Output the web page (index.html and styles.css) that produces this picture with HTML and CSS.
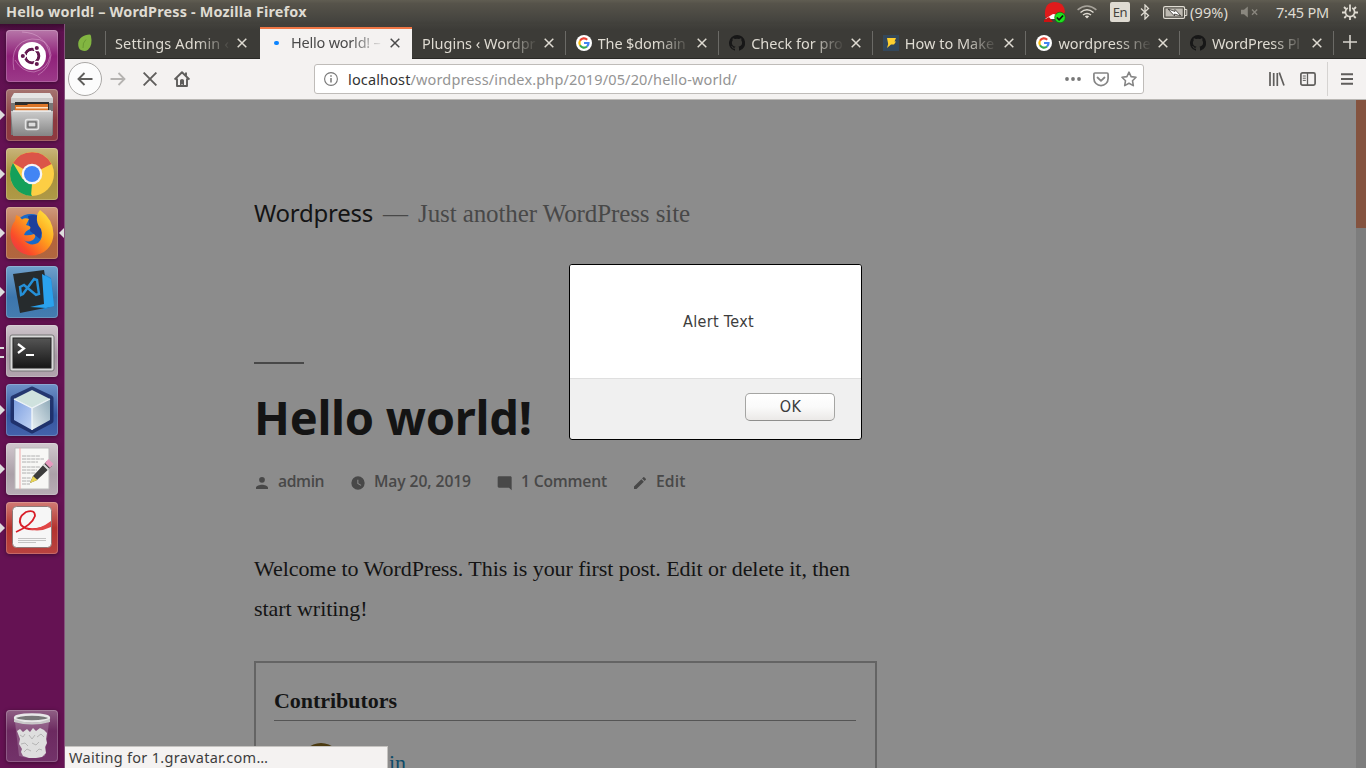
FILE: index.html
```html
<!DOCTYPE html>
<html lang="en">
<head>
<meta charset="utf-8">
<title>Hello world! – WordPress</title>
<link rel="stylesheet" href="styles.css">
</head>
<body>
<svg width="0" height="0" class="defs" aria-hidden="true">
  <defs>
    <linearGradient id="steel" x1="0" y1="0" x2="0" y2="1"><stop offset="0" stop-color="#ccc"/><stop offset="1" stop-color="#858585"/></linearGradient>
    <linearGradient id="dark" x1="0" y1="0" x2="0" y2="1"><stop offset="0" stop-color="#555"/><stop offset="1" stop-color="#161616"/></linearGradient>
    <linearGradient id="fire" x1="1" y1="0" x2="0" y2="1"><stop offset="0" stop-color="#fff14a"/><stop offset=".4" stop-color="#ffa51c"/><stop offset=".75" stop-color="#fa4b2a"/><stop offset="1" stop-color="#e52a5c"/></linearGradient>
    <linearGradient id="cubeL" x1="0" y1="0" x2="1" y2="1"><stop offset="0" stop-color="#7d9fe0"/><stop offset="1" stop-color="#c3d5f4"/></linearGradient>
    <linearGradient id="cubeR" x1="0" y1="1" x2="1" y2="0"><stop offset="0" stop-color="#e9f0f3"/><stop offset="1" stop-color="#8ea9b8"/></linearGradient>
    <symbol id="x" viewBox="0 0 10 10"><path d="M.7.7l8.6 8.6M9.3.7L.7 9.3" fill="none" stroke="currentColor" stroke-width="1.5"/></symbol>
    <symbol id="google" viewBox="0 0 16 16"><circle cx="8" cy="8" r="8" fill="#fff"/><g fill="none" stroke-width="2.2"><path d="M4 5.7A4.6 4.6 0 0 1 11.2 4.7" stroke="#ea4335"/><path d="M4 10.3A4.6 4.6 0 0 1 4 5.7" stroke="#fbbc05"/><path d="M11 11.5A4.6 4.6 0 0 1 4 10.3" stroke="#34a853"/><path d="M8 8h4.5A4.6 4.6 0 0 1 11 11.5" stroke="#4285f4"/></g></symbol>
    <symbol id="github" viewBox="0 0 16 16"><path fill="#171717" d="M8 0a8 8 0 0 0-2.5 15.6c.4.1.5-.2.5-.4v-1.500c-2.200.5-2.700-.9-2.700-.9-.4-.9-.9-1.200-.9-1.200-.7-.5.100-.5.100-.5.8.100 1.200.8 1.200.8.7 1.200 1.900.9 2.300.7.100-.5.300-.9.500-1.100-1.800-.2-3.600-.9-3.600-4 0-.9.300-1.600.8-2.100-.100-.2-.4-1 .100-2.100 0 0 .7-.2 2.200.8a7.500 7.500 0 0 1 4 0c1.500-1 2.200-.8 2.200-.8.4 1.100.200 1.900.1 2.100.5.600.8 1.300.8 2.100 0 3.100-1.900 3.800-3.700 4 .300.300.6.8.6 1.500v2.200c0 .2.100.5.600.4A8 8 0 0 0 8 0z"/></symbol>
  </defs>
</svg>

<header class="panel">
  <span class="panel-title">Hello world! – WordPress - Mozilla Firefox</span>
  <div class="tray">
    <svg class="t-hat" width="22" height="22" viewBox="0 0 22 22"><path d="M1 15Q0 1 11 1Q20 1 21 11L18 16L3 19z" fill="#e01b1b"/><path d="M1 18L9 13L15 14L13 18z" fill="#fff"/><path d="M0 19L5 16L9 21H0z" fill="#c11"/><circle cx="16" cy="16.500" r="5.300" fill="#1fe01f" stroke="#0b6b0b" stroke-width=".7"/><path d="M12.800 16.500l2.300 2.300 4-4.300" fill="none" stroke="#111" stroke-width="1.700"/></svg>
    <svg class="t-wifi" width="20" height="14" viewBox="0 0 20 14"><g fill="none" stroke="#dfdbd2" stroke-width="1.500"><path d="M.6 4.800Q10-2.800 19.400 4.800" opacity=".6"/><path d="M3.500 7.500Q10 2.200 16.500 7.500"/><path d="M6 10Q10 6.900 14 10"/></g><path d="M7.800 11.300Q10 9.600 12.200 11.300L10 13.500z" fill="#dfdbd2"/></svg>
    <span class="lang">En</span>
    <svg class="t-bt" width="10" height="16" viewBox="0 0 10 16"><path d="M1 4.500l7.500 7L5 15V1l3.500 3.500L1 11.500" fill="none" stroke="#dfdbd2" stroke-width="1.300"/></svg>
    <svg class="t-bat" width="25" height="13" viewBox="0 0 25 13"><rect x=".6" y=".6" width="21" height="11.800" rx="1.500" fill="none" stroke="#dfdbd2" stroke-width="1.200"/><path d="M22 3.500h1.800v6H22" fill="none" stroke="#dfdbd2"/><rect x="2.500" y="2.500" width="17.200" height="8" fill="#bdb9b1"/><path d="M5 3l7 2.500v-2l6 6.500-6.500-2v2z" fill="#fff" stroke="#45433e" stroke-width=".9"/></svg>
    <span class="pct">(99%)</span>
    <svg class="t-vol" width="18" height="12" viewBox="0 0 18 12"><path d="M0 3.800h3L6.800.6v10.800L3 8.200H0z" fill="#8a877f"/><path d="M11 3.500l5.200 5.200M16.200 3.500L11 8.700" stroke="#8a877f" stroke-width="1.300"/></svg>
    <span class="clock">7:45 PM</span>
    <svg class="t-gear" width="16" height="16" viewBox="0 0 16 16"><g fill="none" stroke="#dfdbd2"><path d="M5.800 4A4.600 4.600 0 1 0 10.200 4" stroke-width="1.700"/><path d="M8 .5v7" stroke-width="1.800"/><path d="M2 3l2 2M12 5l2-2M0 8.500h3M13 8.500h3M2.300 14l2-2M13.700 14l-2-2M8 13v3" stroke-width="1.800"/></g></svg>
  </div>
</header>

<div class="desktop">
  <nav class="launcher">
    <div class="tile ubuntu"><svg viewBox="0 0 52 52"><g fill="none" stroke="#e6b8dc" stroke-opacity=".45"><path d="M8 40Q3 12 26 9Q43 8 45 25Q44 38 32 45"/><path d="M16 2Q40 3 44 26Q42 39 28 42Q16 42 9 30"/></g><circle cx="26" cy="26" r="14" fill="#fff"/><circle cx="26" cy="26" r="6.800" fill="none" stroke="#63184f" stroke-width="3"/><g stroke="#fff" stroke-width="1.300" fill="#63184f"><path d="M26 26L16 26M26 26l5.500-9.500M26 26l5.500 9.500"/><circle cx="16.800" cy="26" r="2.700"/><circle cx="30.800" cy="18" r="2.700"/><circle cx="30.800" cy="34" r="2.700"/></g><circle cx="26" cy="26" r="5.200" fill="#fff"/></svg></div>
    <div class="tile files run"><svg viewBox="0 0 52 52"><path d="M7 5h38l2 8v33H5V13z" fill="#777"/><path d="M8 4h36l3 5H5z" fill="#e5e5e5"/><path d="M5 9h42v5H5z" fill="#c9c9c9"/><path d="M9 13h34v8H9z" fill="#2d2d2d"/><path d="M9 16h12l1-1h20v7H9z" fill="#dc7628"/><path d="M10 18h32v1.500H10z" fill="#ffe3c5"/><path d="M5 22h42l-1 25H7z" fill="url(#steel)"/><path d="M7 22h38" stroke="#f0f0f0" stroke-width="1.500"/><rect x="19.500" y="30.500" width="13" height="10" rx="2" fill="none" stroke="#e4e4e4" stroke-width="1.500"/><rect x="22" y="33" width="8" height="5" fill="#ddd" stroke="#555"/></svg></div>
    <div class="tile chrome run"><svg viewBox="0 0 52 52"><circle cx="26" cy="26" r="22" fill="#fcce44"/><path d="M26 26L7 15A22 22 0 0 1 45.500 16z" fill="#db5548"/><path d="M26 26l0 22A22 22 0 0 1 7 15L16.500 31z" fill="#14a05a"/><path d="M26 36l-1 12L35 31z" fill="#fcce44"/><circle cx="26" cy="26" r="10.300" fill="#f5f5f5"/><circle cx="26" cy="26" r="8" fill="#4285f4"/></svg></div>
    <div class="tile firefox run active"><svg viewBox="0 0 52 52"><circle cx="25" cy="25" r="18" fill="#1769ca"/><path d="M22 9Q34 5 38 18L34 32L24 24Z" fill="#1d3f9b"/><path d="M34 3Q47 12 47.500 27A21.500 21.500 0 0 1 4.500 27Q5 18 9 14L10 8Q14 9 16 12.500Q19 10.500 23 12L20 18Q26 19 24 22Q19 24 18 28Q23 29 28 27Q31 29 27 33Q21 36 18 33Q24 40 32 36Q38 31 35 22Q30 17 31 9Q32 5 34 3z" fill="url(#fire)"/></svg></div>
    <div class="tile code run"><svg viewBox="0 0 52 52"><path d="M36 7l9 5 3 28-11 4z" fill="#1b8ad8"/><path d="M7 8L38 4l6 37-30 6z" fill="#262b2d"/><path d="M24 41l14-3-2-30 9 5 3 27-8 2z" fill="#2aa2ee"/><path d="M14 21l4-2 12 10 3-1-2-14-3-1-11 15-2 1z" fill="none" stroke="#2590d8" stroke-width="2.400"/></svg></div>
    <div class="tile term run two"><svg viewBox="0 0 52 52"><rect x="4" y="10" width="44" height="36" rx="2" fill="#d9d9d9" stroke="#777"/><rect x="7" y="13" width="38" height="30" fill="url(#dark)" stroke="#222"/><path d="M12 19l6 4.500-6 4.500M20 30h8" fill="none" stroke="#fff" stroke-width="2.200"/></svg></div>
    <div class="tile cube run"><svg viewBox="0 0 52 52"><path d="M26 5l19 9v23L26 47 7 37V14z" fill="#1b2b63" stroke="#1b2b63" stroke-width="5" stroke-linejoin="round" opacity=".85"/><path d="M26 6L44 15 26 24 8 15z" fill="#cfe2de"/><path d="M8 15l18 9v22L8 36z" fill="url(#cubeL)"/><path d="M44 15L26 24v22l18-10z" fill="url(#cubeR)"/><path d="M8 15l18 9 18-9M26 24v22" stroke="#f2f7fa" fill="none" stroke-width="1.300"/></svg></div>
    <div class="tile edit run"><svg viewBox="0 0 52 52"><path d="M9 5h34v41H9z" fill="#f7f7f5" stroke="#bbb"/><path d="M14 5v41" stroke="#f2a9a9"/><path d="M16 13h18M16 16h22M16 19h16M16 24h18M16 27h15M16 30h14M16 35h9M16 38h10M16 41h8" stroke="#b0b0b0" stroke-dasharray="4 .6"/><path d="M24 40l3-7L41 18l5 5-15 14z" fill="#3c3c3c"/><path d="M24 40l3-7 4.500 4z" fill="#e8d454"/><path d="M39 20l5 5 3.500-4-5-5z" fill="#e79ac0"/><path d="M37.500 21.500l5 5" stroke="#ddd" stroke-width="2"/></svg></div>
    <div class="tile pdf run"><svg viewBox="0 0 52 52"><rect x="6.500" y="4.500" width="39" height="41" rx="4" fill="#f6f6f6" stroke="#8e7a78"/><path d="M10 30Q26 23 29 14Q29 7 20 10Q11 16 15 23Q24 32 45 22" fill="none" stroke="#d81e28" stroke-width="1.800"/><path d="M20 26.500Q32 29 45 19v6Q33 31 20 26.500z" fill="#e04747"/><path d="M12 36.500h28M12 38.500h28M12 40.500h18" stroke="#c4c4c4"/></svg></div>
    <div class="tile trash"><svg viewBox="0 0 52 52"><path d="M9 12l4 34q13 4 26 0l4-34z" fill="#fff" fill-opacity=".2"/><path d="M11 21l3-2 3 3 4-3 3 3 3-4 3 3 4-3 4 2 3 3-1 6 1 4-2 4 1 6-4 4-6 1-7 0-6-2-2-4 1-3-3-5 1-5z" fill="#dedede"/><path d="M14 25l3 2 2-3M23 25l3 4 3-4M31 27l4-3 3 3M15 34l4-1 3 3M26 33l4 2 3-3M18 42l3-3 4 2M30 42l3-3 3 1" stroke="#b5b5b5" fill="none"/><ellipse cx="26" cy="8" rx="17" ry="3.500" fill="#777" stroke="#e8e8e8" stroke-width="2.300"/><path d="M8 9q18 7 36 0v3q-18 5-36 0z" fill="#c9c9c9"/></svg></div>
  </nav>

  <main class="browser">
    <div class="tabs">
      <div class="tab pinned"><svg width="16" height="18" viewBox="0 0 16 18"><path d="M12.500.6C7 .8 1.500 4 1.200 9.500Q1 15 4.500 16.300Q8 18 11 15.800Q16 11.500 14 2Q13.600.6 12.500.6z" fill="#82b541"/><path d="M9 5.500Q5.500 8.500 6 14" fill="none" stroke="#659330" stroke-width=".8"/></svg></div>
      <div class="tab t1"><span class="lbl">Settings Admin ‹</span><svg class="close"><use href="#x"/></svg></div>
      <div class="tab t2 current"><b class="dot"></b><span class="lbl">Hello world! –</span><svg class="close"><use href="#x"/></svg></div>
      <div class="tab t3"><span class="lbl">Plugins ‹ Wordpr</span><svg class="close"><use href="#x"/></svg></div>
      <div class="tab"><svg class="fav"><use href="#google"/></svg><span class="lbl tight">The $domain</span><svg class="close"><use href="#x"/></svg></div>
      <div class="tab"><svg class="fav"><use href="#github"/></svg><span class="lbl">Check for pro</span><svg class="close"><use href="#x"/></svg></div>
      <div class="tab"><svg class="fav" viewBox="0 0 16 16"><path d="M0 0h16v16H0z" fill="#33475b"/><path d="M4 3h9l-1.500 3.500h1.500L11 9.500H8L4 13l1.200-4z" fill="#ffd02f"/></svg><span class="lbl">How to Make</span><svg class="close"><use href="#x"/></svg></div>
      <div class="tab"><svg class="fav"><use href="#google"/></svg><span class="lbl">wordpress ne</span><svg class="close"><use href="#x"/></svg></div>
      <div class="tab"><svg class="fav"><use href="#github"/></svg><span class="lbl tight">WordPress Pl</span><svg class="close"><use href="#x"/></svg></div>
      <div class="newtab"><svg width="14" height="14" viewBox="0 0 14 14"><path d="M7 0v14M0 7h14" stroke="#d8d5ce" stroke-width="1.600"/></svg></div>
    </div>

    <div class="toolbar">
      <span class="back"><svg width="16" height="14" viewBox="0 0 16 14"><path d="M15.500 7H1.500M7.500 1L1.500 7l6 6" fill="none" stroke="#5f5e5c" stroke-width="1.900"/></svg></span>
      <svg class="fwd" width="16" height="14" viewBox="0 0 16 14"><path d="M.5 7h14M8.500 1l6 6-6 6" fill="none" stroke="#b5b3b1" stroke-width="1.800"/></svg>
      <svg class="stop" width="14" height="14" viewBox="0 0 14 14"><path d="M.6.6l12.800 12.800M13.400.6L.6 13.400" stroke="#5f5e5c" stroke-width="1.900"/></svg>
      <svg class="home" width="16" height="16" viewBox="0 0 16 16"><path d="M.6 8.600L8 1.300l7.400 7.300M3 7.500V15h10V7.500M12 1.500v3" fill="none" stroke="#5f5e5c" stroke-width="1.900" stroke-linejoin="round"/><path d="M6 9.500Q6 8 8 8t2 1.500V15H8.500v-2h-1v2H6z" fill="#5f5e5c"/></svg>
      <div class="url">
        <svg class="info" width="14" height="14" viewBox="0 0 14 14"><circle cx="7" cy="7" r="6.400" fill="none" stroke="#777" stroke-width="1.100"/><path d="M7 6v4.500M7 3.300v1.500" stroke="#777" stroke-width="1.500"/></svg>
        <span class="addr"><em>localhost</em>/wordpress/index.php/2019/05/20/hello-world/</span>
        <svg class="dots" width="16" height="4" viewBox="0 0 16 4"><g fill="#777"><circle cx="2" cy="2" r="1.900"/><circle cx="8" cy="2" r="1.900"/><circle cx="14" cy="2" r="1.900"/></g></svg>
        <svg class="pocket" width="16" height="15" viewBox="0 0 16 15"><path d="M2 1h12q1.100 0 1.100 1.200V6.500a7.100 7.100 0 0 1-14.200 0V2.200Q.9 1 2 1z" fill="none" stroke="#858585" stroke-width="1.700"/><path d="M4.500 5.500L8 8.800l3.500-3.300" fill="none" stroke="#858585" stroke-width="1.800" stroke-linecap="round"/></svg>
        <svg class="star" width="16" height="16" viewBox="0 0 16 16"><path d="M8 1.200l2.100 4.400 4.900.7-3.500 3.400.8 4.900L8 12.300l-4.300 2.300.8-4.900L1 6.300l4.900-.7z" fill="none" stroke="#858585" stroke-width="1.600" stroke-linejoin="round"/></svg>
      </div>
      <svg class="lib" width="16" height="14" viewBox="0 0 16 14"><path d="M1 0v14M4.700 1v13M8.300 1v13M10.300.5L15 13.500" stroke="#5f5e5c" stroke-width="1.700" fill="none"/></svg>
      <svg class="side" width="16" height="14" viewBox="0 0 16 14"><rect x=".9" y=".9" width="14.200" height="12.200" rx="1.600" fill="none" stroke="#5f5e5c" stroke-width="1.700"/><path d="M7.500 1v12" stroke="#5f5e5c" stroke-width="1.300"/><path d="M2.800 4h3M2.800 6.200h3M2.800 8.400h3" stroke="#5f5e5c" stroke-width="1"/></svg>
      <div class="menu"><svg width="12" height="12" viewBox="0 0 12 12"><path d="M0 1.200h12M0 6h12M0 10.800h12" stroke="#5f5e5c" stroke-width="1.900"/></svg></div>
    </div>

    <section class="viewport">
      <article class="page">
        <div class="site"><span class="site-name">Wordpress</span><span class="dash">—</span><span class="tagline">Just another WordPress site</span></div>
        <hr class="rule">
        <h1>Hello world!</h1>
        <div class="meta">
          <svg width="16" height="16" viewBox="0 0 24 24"><path d="M12 11.500a4.300 4.300 0 1 0 0-8.600 4.300 4.300 0 0 0 0 8.600zm0 3c-3.500 0-9 1.500-9 4.500v2h18v-2c0-3-5.500-4.500-9-4.500z"/></svg><span class="m1">admin</span>
          <svg width="16" height="16" viewBox="0 0 24 24"><path fill-rule="evenodd" d="M12 2a10 10 0 1 0 0 20 10 10 0 0 0 0-20zm4.200 14.200L11 13V7h1.500v5.200l4.500 2.700z"/></svg><span class="m2">May 20, 2019</span>
          <svg width="16" height="16" viewBox="0 0 24 24"><path d="M22 4c0-1.100-.9-2-2-2H3c-1.100 0-2 .9-2 2v13c0 1.100.9 2 2 2h15l4 4z"/></svg><span class="m3">1 Comment</span>
          <svg width="16" height="16" viewBox="0 0 24 24"><path d="M3 17.250V21h3.750L17.800 9.940l-3.750-3.750zM20.700 7.040a1 1 0 0 0 0-1.410l-2.340-2.340a1 1 0 0 0-1.410 0l-1.830 1.830 3.750 3.750z"/></svg><span class="m4">Edit</span>
        </div>
        <p class="body">Welcome to WordPress. This is your first post. Edit or delete it, then<br>start writing!</p>
        <div class="box"><h2>Contributors</h2><div class="who"><b class="avatar"></b><span class="author">admin</span></div></div>
      </article>
      <div class="scroll"><b></b></div>
      <div class="dialog">
        <div class="msg">Alert Text</div>
        <div class="actions"><button>OK</button></div>
      </div>
      <div class="status">Waiting for 1.gravatar.com…</div>
    </section>
  </main>
</div>
</body>
</html>
```
FILE: styles.css
```css
* { box-sizing: border-box; }
body { margin: 0; width: 1366px; height: 768px; overflow: hidden; font-family: "Noto Sans", sans-serif; font-size: 14.5px; color: #3d3d3d; }
svg { display: block; flex: none; }
.defs { position: absolute; }
em { font-style: normal; }

.panel { height: 24px; display: flex; justify-content: space-between; align-items: center; padding: 0 8px 0 6px; background: linear-gradient(#605d52, #56534a 15%, #45443f 85%, #403f3a); color: #dfdbd2; white-space: nowrap; line-height: 20px; }
.panel-title { font-weight: 700; font-size: 14.4px; letter-spacing: .18px; padding-bottom: 1px; }
.tray { display: flex; align-items: center; }
.t-hat { margin-right: 11px; }
.t-wifi { margin-right: 13px; }
.lang { width: 20px; height: 20px; border-radius: 2px; background: #dfdbd2; color: #45433d; font-size: 13px; line-height: 20px; text-align: center; letter-spacing: -.5px; margin-right: 10px; }
.t-bt { margin-right: 13px; }
.t-bat { margin-right: 2px; }
.pct { width: 38px; margin-right: 13px; padding-bottom: 1px; letter-spacing: .13px; }
.t-vol { margin-right: 17px; }
.clock { width: 53px; margin-right: 13px; padding-bottom: 1px; letter-spacing: -.2px; }

.desktop { display: flex; height: 744px; }
.launcher { width: 65px; flex: none; background: linear-gradient(#3c0a31, #5e1150 8px, #651253 120px); border-right: 1px solid #84527b; padding: 6px 0 6px 6px; display: flex; flex-direction: column; gap: 7px; }
.tile { position: relative; width: 52px; height: 52px; flex: none; border-radius: 4px; box-shadow: inset 0 0 0 1px rgba(255,255,255,.2), 0 1px 4px rgba(0,0,0,.4); }
.tile svg { width: 52px; height: 52px; }
.ubuntu { background: linear-gradient(#b777a9, #8f2179 50%, #9c3a89); }
.files { background: linear-gradient(#a57571, #8c3a40 60%, #8f3a40); }
.chrome { background: linear-gradient(#c9b57a, #a8903c 50%, #af9a47); }
.firefox { background: linear-gradient(#cf9a7d, #b4643c 60%, #b0663f); }
.code { background: linear-gradient(#70a1cb, #3c76ad 60%, #457cb0); }
.term { background: linear-gradient(#cfc5cc, #a598a2 60%, #b2a5ae); }
.cube { background: linear-gradient(#6f92c8, #3556a0 60%, #4463ab); }
.edit { background: linear-gradient(#d1c8ce, #aba0a8 60%, #b8adb5); }
.pdf { background: linear-gradient(#d17b74, #b3332f 50%, #b84340); }
.trash { background: linear-gradient(#906085, #6c2a60 40%, #73336a); margin-top: auto; }
.run::before { content: ""; position: absolute; left: -6px; top: 21px; border: 5px solid transparent; border-left-color: #ddd; border-right: 0; }
.active::after { content: ""; position: absolute; right: -6px; top: 21px; border: 5px solid transparent; border-right-color: #ddd; border-left: 0; }
.two::before { border: 0; width: 4px; height: 7px; top: 22px; border-top: 2px solid #ddd; border-bottom: 2px solid #ddd; }

.browser { flex: 1; min-width: 0; display: flex; flex-direction: column; }
.tabs { height: 35px; flex: none; display: flex; background: linear-gradient(#42413c, #3c3b37 6px); color: #dfdbd2; border-bottom: 1px solid #2a2926; }
.tab { position: relative; width: 153.600px; flex: none; display: flex; align-items: center; padding: 4px 0 0 10px; white-space: nowrap; }
.tab::after { content: ""; position: absolute; right: 0; top: 7px; height: 24px; width: 1px; background: #6b6a66; }
.pinned { width: 41px; padding-left: 12px; }
.t1 { width: 154px; padding-left: 9px; }
.t1 .lbl { letter-spacing: .15px; }
.t1 .close { margin-right: 13px; }
.t2 { width: 152px; margin: 3px 0 -1px; padding: 0 0 3px 14px; background: #f4f2f1; color: #4a4a4a; border-top: 2px solid #f07746; z-index: 1; }
.t2 .lbl { letter-spacing: -.22px; }
.t2::after, .t1::after { display: none; }
.dot { width: 5px; height: 4px; border-radius: 3px; background: #0a84ff; margin-right: 12px; }
.fav { width: 16px; height: 16px; margin-right: 6px; }
.lbl { flex: 1; overflow: hidden; margin-right: 6px; line-height: 20px; padding-bottom: 1px; -webkit-mask-image: linear-gradient(90deg, #000 calc(100% - 34px), transparent); mask-image: linear-gradient(90deg, #000 calc(100% - 34px), transparent); }
.tight { letter-spacing: -.12px; }
.close { width: 10px; height: 10px; margin-right: 12px; }
.newtab { flex: 1; display: flex; align-items: center; padding: 2px 0 0 9px; }

.toolbar { height: 41px; flex: none; display: flex; align-items: center; background: #f4f2f1; border-bottom: 1px solid #b9b7b4; padding-left: 3px; }
.back { width: 34px; height: 34px; border-radius: 50%; border: 1px solid #aaa8a6; background: #fcfcfc; display: flex; align-items: center; justify-content: center; margin-right: 8px; }
.fwd { margin-right: 17px; }
.stop { margin-right: 17px; }
.home { margin-right: 124px; }
.url { width: 830px; height: 30px; border: 1px solid #bfbcb9; border-radius: 3px; background: #fff; display: flex; align-items: center; padding: 0 6px 0 9px; color: #949494; margin-right: 125px; }
.info { margin-right: 10px; }
.addr { flex: 1; white-space: nowrap; letter-spacing: .14px; }
.addr em { color: #333; }
.dots { margin-right: 12px; }
.pocket { margin-right: 12px; }
.lib { margin-right: 15px; }
.side { margin-right: 11px; }
.menu { flex: 1; height: 34px; border-left: 1px solid #d5d3d1; display: flex; align-items: center; padding-left: 13px; }

.viewport { position: relative; flex: 1; min-height: 0; overflow: hidden; display: flex; justify-content: space-between; background: #8c8c8c; }
.page { padding: 93px 0 0 189px; width: 812px; height: 668px; overflow: hidden; font-family: "Liberation Serif", serif; color: #141414; }
.site { display: flex; align-items: baseline; font-size: 25px; line-height: 40px; height: 40px; color: #484848; white-space: nowrap; }
.site-name { font-family: "Noto Sans", sans-serif; font-size: 24px; color: #141414; width: 129px; letter-spacing: -.25px; }
.dash { width: 35px; }
.tagline { letter-spacing: -.096px; }
.rule { width: 50px; height: 2px; border: 0; margin: 129px 0 0; background: #484848; }
h1 { font: 700 47px/60px "Noto Sans", sans-serif; margin: 23px 0 0; white-space: nowrap; letter-spacing: -.3px; }
.meta { display: flex; align-items: center; height: 24px; margin-top: 22px; font: 600 15.700px/24px "Open Sans", sans-serif; color: #484848; fill: #484848; white-space: nowrap; letter-spacing: -.2px; }
.meta svg { position: relative; top: 2px; margin-right: 8px; }
.m1 { width: 72px; letter-spacing: -.4px; }
.m2 { width: 123px; letter-spacing: -.1px; }
.m3 { width: 111px; }
.m4 { letter-spacing: .1px; }
.body { font-size: 22px; line-height: 40px; margin: 56px 0 0; white-space: nowrap; letter-spacing: -.057px; }
.box { width: 623px; height: 160px; border: 2px solid #646464; margin-top: 32px; padding: 18px 19px 0 18px; }
h2 { margin: 0; font-size: 22px; line-height: 40px; height: 40px; border-bottom: 1px solid #555; letter-spacing: -.04px; }
.who { display: flex; padding: 22px 0 0 27px; }
.avatar { width: 40px; height: 40px; border-radius: 50%; background: #4b3a10; margin-right: 10px; }
.author { font-size: 22px; line-height: 40px; color: #0d4a68; }
.scroll { width: 10px; background: #7d7d7d; }
.scroll b { display: block; height: 128px; background: #84533f; }
.dialog { position: absolute; left: 504px; top: 164px; width: 293px; height: 176px; border: 1px solid #000; border-radius: 3px; background: #f0f0f0; overflow: hidden; font: 16px "DejaVu Sans Condensed", "DejaVu Sans", sans-serif; color: #3d3d3d; }
.msg { height: 114px; background: #fff; border-bottom: 1px solid #dfdfdf; display: flex; align-items: center; justify-content: center; padding-left: 6px; white-space: nowrap; letter-spacing: .34px; }
.actions { display: flex; justify-content: flex-end; padding: 14px 26px 0 0; }
button { width: 90px; height: 28px; border: 1px solid #a5a5a3; border-bottom-color: #8f8f8d; border-radius: 5px; background: linear-gradient(#fff, #fafafa 50%, #ebe9e7); font: inherit; letter-spacing: .4px; color: inherit; padding: 0 0 2px 1px; }
.status { position: absolute; left: 0; bottom: 0; width: 323px; height: 22px; background: #f4f2f1; border: solid #c5c3c0; border-width: 1px 1px 0 0; padding-left: 4px; line-height: 20px; white-space: nowrap; letter-spacing: .29px; }
```
